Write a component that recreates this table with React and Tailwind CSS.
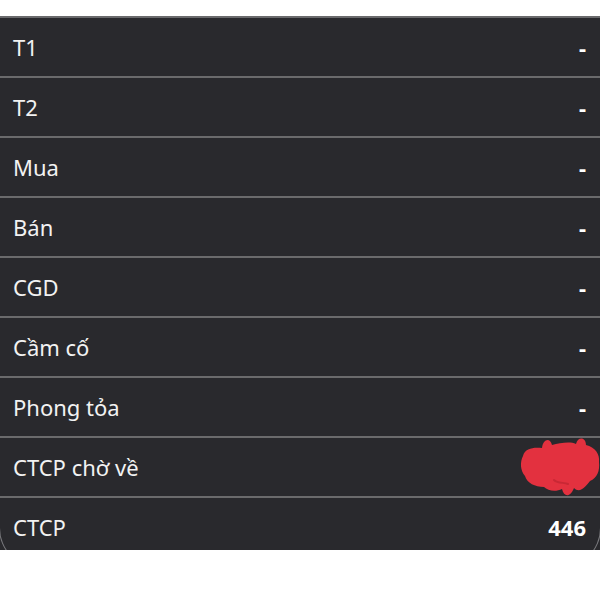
import React from 'react';

const rows = [
  { label: 'T1', value: '-' },
  { label: 'T2', value: '-' },
  { label: 'Mua', value: '-' },
  { label: 'Bán', value: '-' },
  { label: 'CGD', value: '-' },
  { label: 'Cầm cố', value: '-' },
  { label: 'Phong tỏa', value: '-' },
  { label: 'CTCP chờ về', value: null, hidden: true },
  { label: 'CTCP', value: '446' },
];

function Scribble() {
  return (
    <svg width="80" height="64" viewBox="0 0 80 64" className="-mr-[14px] -my-2 translate-y-[1px]">
      <path
        d="M3 20 C5 12 14 11 22 12 C23 3 30 1 32 9 C40 7 50 5 56 8 C58 0 66 1 66 9 C75 11 80 18 79 26 C80 35 77 42 70 45 C66 50 60 58 54 52 C50 62 44 61 42 53 C36 56 28 55 24 51 C15 51 7 47 5 40 C0 34 0 26 3 20 Z"
        fill="#e3313f"
      />
      <path d="M34 44 C38 48 44 46 48 48" stroke="#c92835" strokeWidth="2" fill="none" strokeLinecap="round" />
    </svg>
  );
}

export default function App() {
  return (
    <div className="min-h-[600px] bg-white pt-[16px] font-['Noto_Sans',sans-serif]">
      <div className="relative h-[534px] overflow-hidden bg-[#29292d]">
        {rows.map((row) => (
          <div
            key={row.label}
            className="flex h-[60px] items-center justify-between border-t-2 border-[#6a6a6c] pl-[13px] pr-[14px]"
          >
            <span className="text-[22px] text-[#f2f2f2]">{row.label}</span>
            {row.hidden ? (
              <Scribble />
            ) : (
              <span className="text-[22px] font-bold text-white">{row.value}</span>
            )}
          </div>
        ))}
        {/* rounded edge of the card underneath */}
        <div className="pointer-events-none absolute -bottom-[18px] -left-px -right-px h-[70px] rounded-b-[40px] border border-t-0 border-[#7a7a7e]" />
      </div>
    </div>
  );
}
